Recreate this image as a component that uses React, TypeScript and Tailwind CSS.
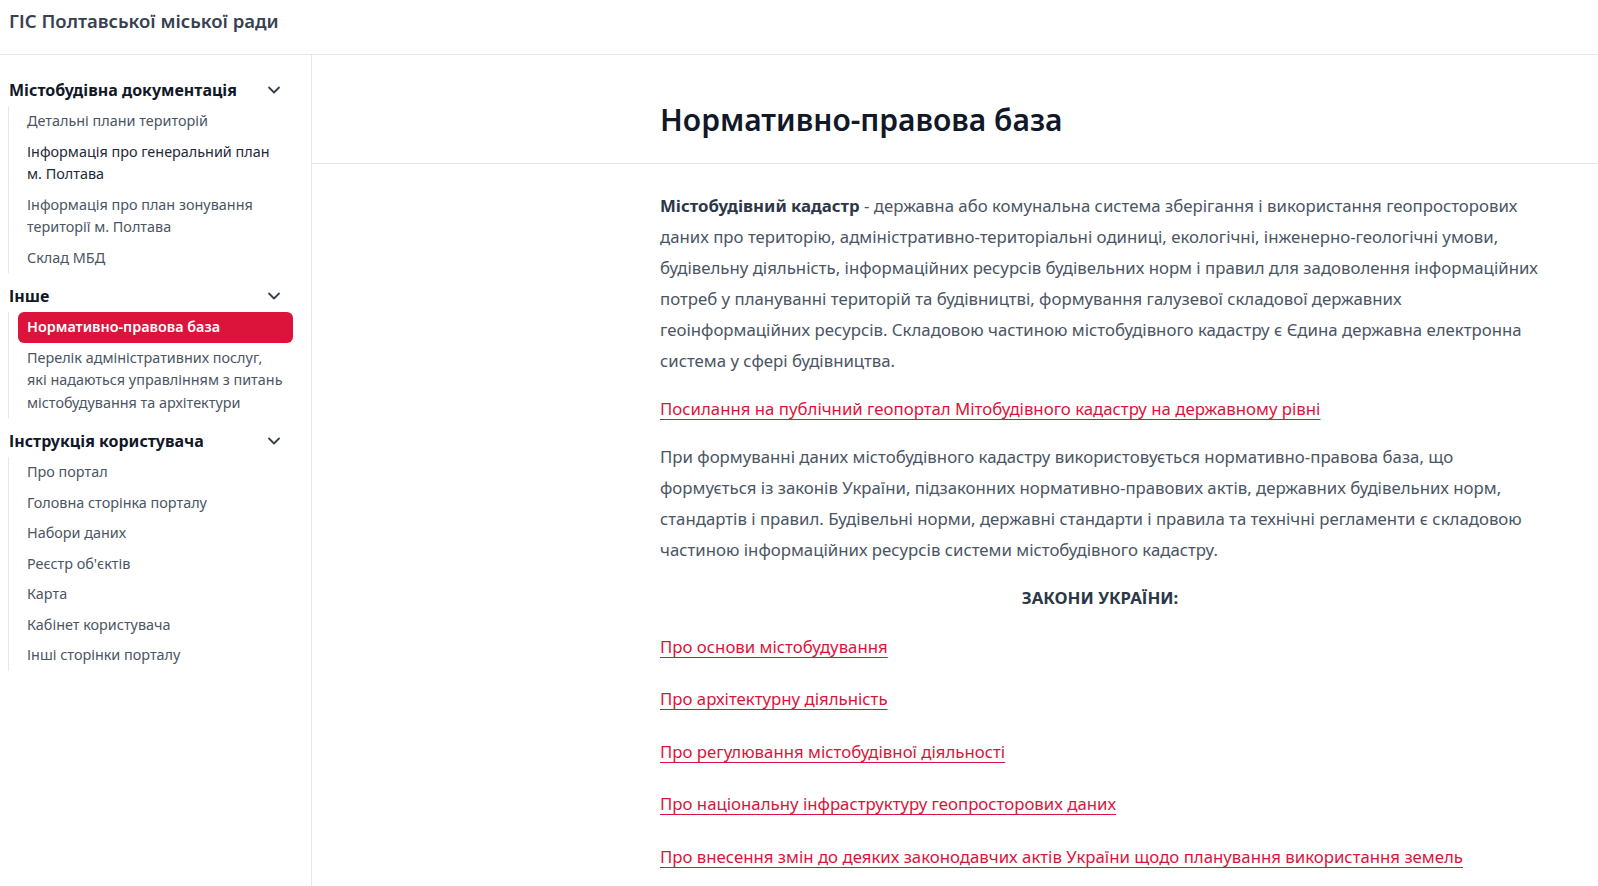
import { ChevronDown } from "lucide-react";

type NavItem = { label: string; active?: boolean; strong?: boolean };
type NavGroup = { title: string; items: NavItem[] };

const groups: NavGroup[] = [
  {
    title: "Містобудівна документація",
    items: [
      { label: "Детальні плани територій" },
      { label: "Інформація про генеральний план м. Полтава", strong: true },
      { label: "Інформація про план зонування території м. Полтава" },
      { label: "Склад МБД" },
    ],
  },
  {
    title: "Інше",
    items: [
      { label: "Нормативно-правова база", active: true },
      { label: "Перелік адміністративних послуг, які надаються управлінням з питань містобудування та архітектури" },
    ],
  },
  {
    title: "Інструкція користувача",
    items: [
      { label: "Про портал" },
      { label: "Головна сторінка порталу" },
      { label: "Набори даних" },
      { label: "Реєстр об'єктів" },
      { label: "Карта" },
      { label: "Кабінет користувача" },
      { label: "Інші сторінки порталу" },
    ],
  },
];

const laws = [
  "Про основи містобудування",
  "Про архітектурну діяльність",
  "Про регулювання містобудівної діяльності",
  "Про національну інфраструктуру геопросторових даних",
  "Про внесення змін до деяких законодавчих актів України щодо планування використання земель",
];

const Sidebar = () => {
  return (
    <aside className="w-[312px] shrink-0 border-r border-[#e5e7eb] pt-[23px]">
      {groups.map((group, gi) => (
        <div key={group.title} className={gi > 0 ? "mt-[11px]" : ""}>
          {/* Group title */}
          <div className="flex h-6 items-center justify-between pl-[9px] pr-[27px]">
            <span className="text-[16px] font-bold leading-6 text-[#111827]">{group.title}</span>
            <ChevronDown size={20} strokeWidth={2.2} className="text-[#374151]" />
          </div>
          <ul className="ml-2 mt-1 w-[285px] border-l border-[#e5e7eb] pl-[9px]">
            {group.items.map((item) =>
              item.active ? (
                <li
                  key={item.label}
                  className="rounded-md bg-[#dc143c] px-[9px] py-1 text-[14.4px] font-semibold leading-[22.5px] text-white"
                >
                  {item.label}
                </li>
              ) : (
                <li
                  key={item.label}
                  className={`px-[9px] py-1 text-[14.4px] leading-[22.5px] ${
                    item.strong ? "text-[#1f2937]" : "text-[#4b5563]"
                  }`}
                >
                  {item.label}
                </li>
              )
            )}
          </ul>
        </div>
      ))}
    </aside>
  );
};

export default function App() {
  return (
    <div className="min-h-screen bg-white" style={{ fontFamily: '"Noto Sans", "Open Sans", sans-serif' }}>
      {/* Top bar */}
      <header className="h-[55px] border-b border-[#e5e7eb] px-[9px] pt-[7px]">
        <h1 className="text-[18.5px] font-semibold leading-7 text-[#374151]">ГІС Полтавської міської ради</h1>
      </header>

      <div className="flex min-h-[831px]">
        <Sidebar />

        <main className="flex-1">
          <div className="border-b border-[#e5e7eb] pb-[23px] pl-[348px] pt-[45px]">
            <h2 className="text-[30px] font-semibold leading-10 text-[#111827]">Нормативно-правова база</h2>
          </div>

          <div className="box-content w-[880px] pl-[348px] pt-[27px] text-[16.8px] leading-[30.9px] text-[#4b5563]">
            <p>
              <strong className="font-bold text-[#2d3748]">Містобудівний кадастр</strong> - державна або
              комунальна система зберігання і використання геопросторових даних про територію,
              адміністративно-територіальні одиниці, екологічні, інженерно-геологічні умови, будівельну
              діяльність, інформаційних ресурсів будівельних норм і правил для задоволення інформаційних
              потреб у плануванні територій та будівництві, формування галузевої складової державних
              геоінформаційних ресурсів. Складовою частиною містобудівного кадастру є Єдина державна
              електронна система у сфері будівництва.
            </p>

            <p className="mt-[18px]">
              <a href="#" className="text-[#dc143c] underline decoration-1 underline-offset-[4px]">
                Посилання на публічний геопортал Мітобудівного кадастру на державному рівні
              </a>
            </p>

            <p className="mt-[17px]">
              При формуванні даних містобудівного кадастру використовується нормативно-правова база, що
              формується із законів України, підзаконних нормативно-правових актів, державних будівельних
              норм, стандартів і правил. Будівельні норми, державні стандарти і правила та технічні
              регламенти є складовою частиною інформаційних ресурсів системи містобудівного кадастру.
            </p>

            <p className="mt-[17px] text-center font-bold text-[#2d3748]">ЗАКОНИ УКРАЇНИ:</p>

            <div className="mt-[18px] flex flex-col gap-[21.6px]">
              {laws.map((law) => (
                <p key={law}>
                  <a href="#" className="text-[#dc143c] underline decoration-1 underline-offset-[4px]">
                    {law}
                  </a>
                </p>
              ))}
            </div>
          </div>
        </main>
      </div>
    </div>
  );
}
